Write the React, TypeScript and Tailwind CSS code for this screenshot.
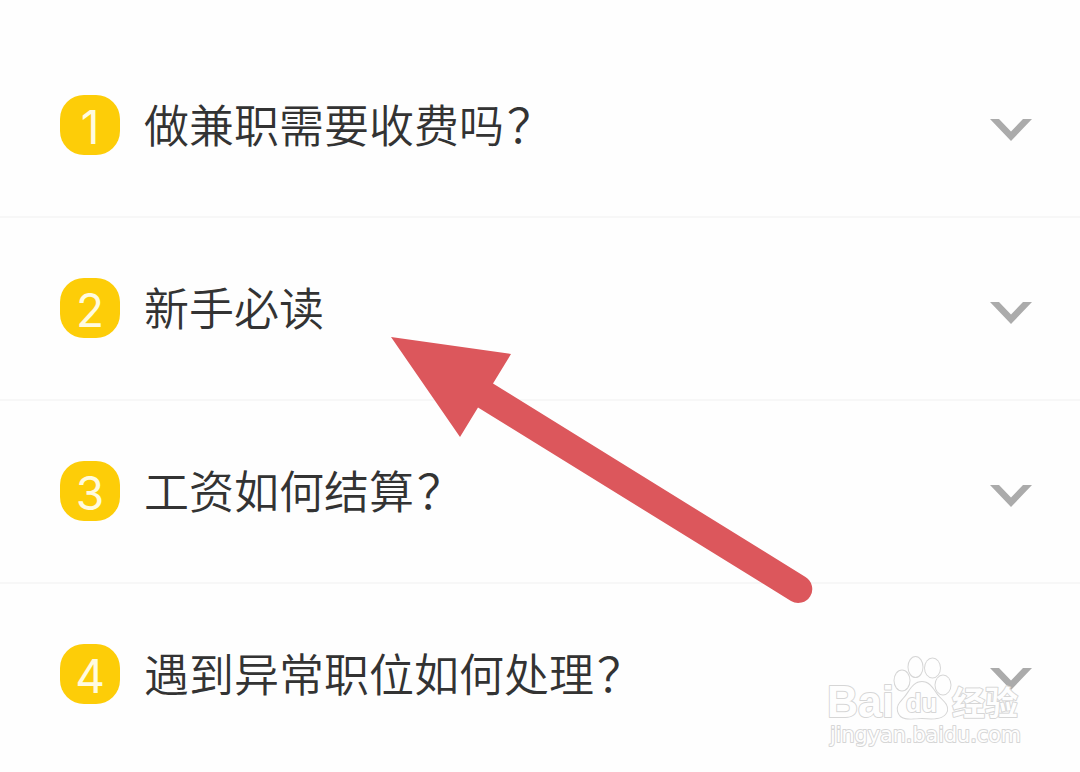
const questions = [
  { title: '做兼职需要收费吗', asks: true },
  { title: '新手必读', asks: false },
  { title: '工资如何结算', asks: true },
  { title: '遇到异常职位如何处理', asks: true },
]

export default function App() {
  return (
    <main className="relative h-[772px] w-[1080px] overflow-hidden bg-[#fefefe] pt-[35px] font-['Noto_Sans_CJK_SC',sans-serif]">
      <ul>
        {questions.map((q, i) => (
          <QuestionRow key={q.title} index={i + 1} title={q.title} asks={q.asks} />
        ))}
      </ul>
      <PointerArrow />
      <Watermark />
    </main>
  )
}

interface RowProps {
  index: number
  title: string
  asks: boolean
}

function QuestionRow({ index, title, asks }: RowProps) {
  return (
    <li className="flex h-[183px] items-center border-b-2 border-[#f7f7f7] pr-12 pb-0.5 pl-[60px] last:border-transparent">
      <span className="flex size-[60px] shrink-0 items-center justify-center rounded-[24px] bg-[#fdcd08] pt-1 font-['Inter',sans-serif] text-[46px] leading-none font-normal text-[#fffbe0]">
        {index}
      </span>
      <span className="mb-px ml-6 flex-1 text-[45px] leading-[60px] font-[350] whitespace-nowrap text-[#333333]">
        {title}
        {asks && <span className="ml-[3px] text-[47px] leading-none">？</span>}
      </span>
      <svg className="mt-2.5 h-[22px] w-[42px]" viewBox="0 0 42 22" fill="#ababab">
        <path d="M0 0h9l12 12.5L33 0h9L21 22z" />
      </svg>
    </li>
  )
}

function PointerArrow() {
  return (
    <svg
      className="absolute top-[330px] left-[380px] h-[280px] w-[440px]"
      viewBox="380 330 440 280"
      fill="#dc575c"
    >
      <path d="M391 337 511 354 493 383.5 805.5 577A14 14 0 0 1 791 601L478 407.500 460 437Z" />
    </svg>
  )
}

function Watermark() {
  return (
    <svg
      className="absolute top-[640px] left-[810px] h-[120px] w-[240px]"
      viewBox="0 0 240 120"
      fill="#fefefe"
      stroke="#d6d6d6"
      strokeWidth="2"
      strokeLinejoin="round"
      paintOrder="stroke"
    >
      <text
        className="font-['Liberation_Sans',sans-serif] font-bold"
        x="17"
        y="77"
        fontSize="45"
        textLength="67"
        lengthAdjust="spacingAndGlyphs"
      >
        Bai
      </text>
      <g strokeWidth="2">
        <ellipse cx="92" cy="40.500" rx="7.500" ry="10" />
        <ellipse cx="105.500" cy="27" rx="7" ry="10" />
        <ellipse cx="122.500" cy="28" rx="7.500" ry="9.500" />
        <ellipse cx="133" cy="45" rx="7.500" ry="9.500" />
        <path d="M112 42c-9 0-12 9-17 15s-8 8-7 14c2 9 11 8 24 7 13 1 22 1 25-7 1-6-3-9-8-14s-8-15-17-15Z" />
      </g>
      <text
        className="font-['Liberation_Sans',sans-serif] font-bold"
        x="96"
        y="72"
        fontSize="26"
        textLength="31"
        lengthAdjust="spacingAndGlyphs"
      >
        du
      </text>
      <text className="font-['Noto_Sans_CJK_SC',sans-serif] font-bold" x="142" y="75" fontSize="33">
        经验
      </text>
      <text
        className="font-['DejaVu_Sans',sans-serif]"
        x="20"
        y="102"
        fontSize="21"
        textLength="191"
        lengthAdjust="spacingAndGlyphs"
      >
        jingyan.baidu.com
      </text>
    </svg>
  )
}
